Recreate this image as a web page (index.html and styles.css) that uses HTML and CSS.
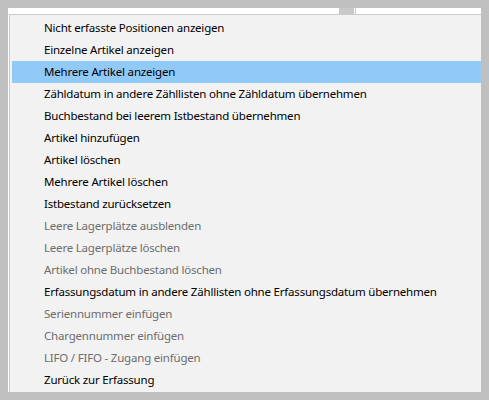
FILE: index.html
```html
<!DOCTYPE html>
<html>
<head>
<meta charset="utf-8">
<link rel="stylesheet" href="styles.css">
</head>
<body>
<div class="frame">
  <div class="topbar">
    <div class="tb-white tb-a"></div>
    <div class="tb-block"></div>
    <div class="tb-white tb-gap"></div>
    <div class="tb-line"></div>
    <div class="tb-white tb-b"></div>
  </div>
  <div class="body">
    <ul class="menu">
      <li class="item">Nicht erfasste Positionen anzeigen</li>
      <li class="item">Einzelne Artikel anzeigen</li>
      <li class="item active">Mehrere Artikel anzeigen</li>
      <li class="item">Zähldatum in andere Zähllisten ohne Zähldatum übernehmen</li>
      <li class="item">Buchbestand bei leerem Istbestand übernehmen</li>
      <li class="item">Artikel hinzufügen</li>
      <li class="item">Artikel löschen</li>
      <li class="item">Mehrere Artikel löschen</li>
      <li class="item">Istbestand zurücksetzen</li>
      <li class="item disabled">Leere Lagerplätze ausblenden</li>
      <li class="item disabled">Leere Lagerplätze löschen</li>
      <li class="item disabled">Artikel ohne Buchbestand löschen</li>
      <li class="item">Erfassungsdatum in andere Zähllisten ohne Erfassungsdatum übernehmen</li>
      <li class="item disabled">Seriennummer einfügen</li>
      <li class="item disabled">Chargennummer einfügen</li>
      <li class="item disabled">LIFO / FIFO - Zugang einfügen</li>
      <li class="item">Zurück zur Erfassung</li>
    </ul>
  </div>
</div>
</body>
</html>
```
FILE: styles.css
```css
html, body {
  margin: 0;
  padding: 0;
  background: #c0c0c0;
}
body {
  padding: 8px 8px 0 8px;
  font-family: "Noto Sans", "Open Sans", sans-serif;
  font-size: 11.5px;
  letter-spacing: -0.2px;
}
.frame {
  width: 473px;
  height: 384px;
  background: #ffffff;
  display: flex;
  flex-direction: column;
}
.topbar {
  height: 6px;
  display: flex;
  flex: none;
}
.tb-white { background: #ffffff; }
.tb-a { width: 331px; }
.tb-block { width: 15px; background: #c8c8c8; }
.tb-gap { width: 1px; }
.tb-line { width: 1px; background: #c8c8c8; }
.tb-b { flex: 1; }
.body {
  flex: 1;
  margin-left: 1px;
  border-top: 1px solid #cccccc;
  border-left: 1px solid #cccccc;
  background: #f2f2f2;
  padding-top: 2px;
}
.menu {
  list-style: none;
  margin: 0;
  padding: 0;
}
.item {
  height: 22px;
  line-height: 22px;
  margin-left: 2px;
  padding-left: 32px;
  color: #000000;
  white-space: nowrap;
}
.item.active {
  background: #91c9f7;
}
.item.disabled {
  color: #6d6d6d;
}
```
